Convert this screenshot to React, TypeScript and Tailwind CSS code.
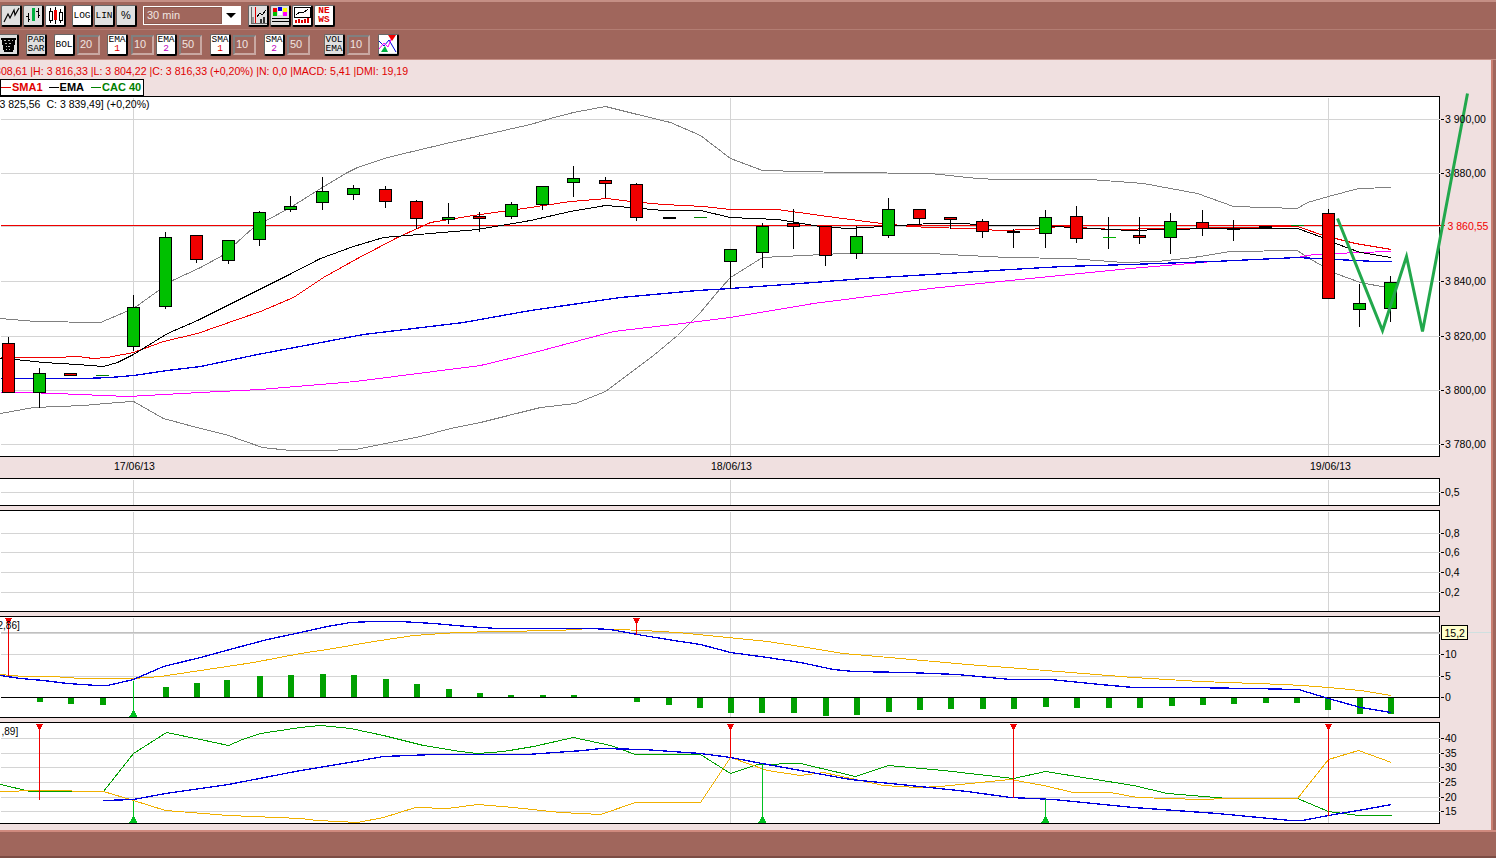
import React from 'react';

// [x, bodyTop, bodyBottom, wickTop, wickBottom, colour]
type Candle = [number, number, number, number, number, 'g' | 'r'];

const candles: Candle[] = [
  [8, 343, 392, 336, 392, 'r'], [39, 373, 392, 367, 407, 'g'], [70, 373, 375, 373, 375, 'r'],
  [133, 307, 346, 294, 350, 'g'], [165, 237, 306, 231, 308, 'g'], [196, 235, 259, 235, 262, 'r'],
  [228, 240, 260, 240, 263, 'g'], [259, 212, 239, 210, 245, 'g'], [290, 206, 209, 195, 211, 'g'],
  [322, 191, 202, 176, 209, 'g'], [353, 188, 194, 184, 199, 'g'], [385, 189, 201, 185, 207, 'r'],
  [416, 201, 218, 199, 228, 'r'], [448, 217, 219, 202, 223, 'g'], [479, 216, 218, 211, 231, 'r'],
  [511, 204, 216, 201, 218, 'g'], [542, 186, 204, 185, 209, 'g'], [573, 178, 182, 165, 196, 'g'],
  [605, 180, 183, 176, 197, 'r'], [636, 184, 217, 182, 220, 'r'], [730, 249, 261, 249, 288, 'g'],
  [762, 226, 252, 222, 267, 'g'], [793, 223, 226, 208, 248, 'r'], [825, 226, 255, 225, 265, 'r'],
  [856, 236, 253, 225, 258, 'g'], [888, 209, 235, 197, 237, 'g'], [919, 209, 218, 209, 223, 'r'],
  [950, 217, 219, 216, 228, 'r'], [982, 221, 231, 218, 237, 'r'], [1013, 231, 232, 228, 247, 'r'],
  [1045, 217, 233, 209, 247, 'g'], [1076, 216, 238, 205, 242, 'r'], [1139, 235, 237, 216, 243, 'r'],
  [1170, 221, 237, 212, 253, 'g'], [1202, 222, 228, 209, 235, 'r'], [1233, 228, 229, 219, 240, 'r'],
  [1265, 226, 227, 226, 227, 'g'], [1328, 213, 298, 208, 298, 'r'], [1359, 303, 309, 283, 326, 'g'],
  [1390, 282, 308, 275, 321, 'g'],
];

const bandUp = '0,318 35,321 100,322 133,308 172,280 200,267 222,255 253,227 290,207 317,190 347,172 357,167 387,157 450,142 530,124 550,118 573,112 605,106 637,114 670,122 700,135 730,158 762,170 843,172 930,173 977,178 997,179 1090,179 1143,183 1197,193 1233,206 1297,208 1307,202 1328,196 1358,188 1391,187';
const bandLow = '0,413 33,407 83,405 117,402 133,401 163,418 200,428 225,434 262,447 290,450 320,450 355,449 385,443 420,436 450,428 480,422 540,407 575,403 605,391 653,355 677,335 700,312 720,288 730,277 762,257 843,253 930,253 967,255 1007,257 1070,258 1123,262 1157,261 1193,257 1230,251 1297,250 1307,257 1323,266 1335,273 1360,282 1391,288';
const emaShort = '0,358 15,359 43,362 77,364 103,366 117,362 133,354 167,333 197,320 247,295 287,275 320,258 353,246 383,237 477,229 530,220 570,211 605,205 630,207 663,210 700,210 730,217 777,219 820,226 847,228 883,226 930,223 963,223 990,225 1037,225 1090,228 1130,230 1163,229 1217,228 1297,228 1322,237 1335,243 1360,252 1391,257';
const smaShort = '0,357 55,357 77,356 93,358 107,357 133,352 163,341 197,333 260,311 293,297 323,277 357,258 397,237 430,222 473,215 530,207 570,201 607,198 630,201 663,204 703,206 730,209 777,209 820,215 873,222 910,226 930,227 967,228 1000,230 1030,229 1060,226 1113,229 1163,228 1297,226 1323,235 1355,243 1391,249';
const emaLong = '0,378 83,378 110,377 133,375 167,370 200,366 257,354 363,334 463,322 530,310 620,297 697,290 730,288 813,282 863,278 930,274 1010,269 1063,266 1130,264 1213,261 1297,257 1335,259 1375,261 1391,261';
const smaLong = '0,392 25,392 55,393 127,396 200,392 260,389 355,381 480,365 530,353 613,331 690,322 730,317 813,303 930,288 1030,278 1130,268 1213,261 1297,257 1313,254 1358,252 1391,251';

const macdBlue = '0,675 20,678 43,680 67,683 97,685 107,685 133,679 163,666 200,657 233,648 267,639 300,632 327,626 350,622 373,621 400,621 433,623 467,626 497,628 530,628 590,628 610,629 637,634 667,639 700,644 730,652 767,657 800,662 833,669 853,671 907,672 957,674 1010,679 1050,679 1100,684 1133,687 1187,687 1250,688 1298,689 1328,698 1360,707 1391,712';
const macdOrange = '0,674 23,676 53,676 80,678 133,678 160,676 200,670 253,662 300,653 333,648 367,642 413,635 457,632 497,631 557,630 590,628 643,630 677,632 727,637 767,641 800,646 843,653 900,658 967,664 1020,668 1083,673 1133,677 1200,681 1283,684 1302,685 1328,687 1360,690 1391,695';
const histogram: [number, number][] = [
  [40, 701], [71, 703], [103, 704], [166, 686], [197, 682], [227, 679], [260, 675], [291, 674], [323, 673],
  [354, 674], [386, 678], [417, 683], [449, 688], [480, 692], [511, 694], [543, 694], [574, 694], [606, 696],
  [637, 701], [669, 704], [700, 707], [731, 712], [762, 712], [794, 712], [826, 715], [857, 714], [889, 711],
  [920, 709], [951, 708], [983, 708], [1014, 708], [1046, 706], [1077, 707], [1109, 707], [1140, 707],
  [1172, 705], [1203, 704], [1234, 703], [1266, 702], [1297, 702], [1328, 709], [1360, 713], [1391, 713],
];

const dmiGreen = '0,784 30,791 103,791 133,753 166,732 200,739 228,745 242,739 260,733 300,727 320,725 350,728 383,735 423,745 460,751 477,753 503,751 533,746 573,737 610,745 635,754 700,754 730,773 757,764 800,763 855,776 888,765 943,770 1013,778 1045,771 1133,785 1167,793 1227,798 1297,798 1328,811 1358,815 1391,815';
const dmiOrange = '0,791 38,790 103,791 133,800 165,810 228,815 300,818 317,820 357,822 383,817 415,807 447,808 477,804 513,807 560,812 600,814 635,802 700,802 730,757 767,770 800,775 823,772 883,785 917,787 940,786 1010,779 1043,785 1073,792 1110,792 1137,797 1200,799 1227,798 1297,798 1328,759 1358,750 1391,762';
const dmiBlue = '103,800 133,799 165,793 228,784 300,770 343,763 383,756 433,754 527,754 583,750 600,748 643,749 700,753 730,757 767,764 800,770 850,779 900,784 967,791 1010,797 1053,799 1133,807 1217,813 1290,820 1302,820 1328,815 1358,810 1391,804';

function Line({ points, color, width = 1 }: { points: string; color: string; width?: number }) {
  return <polyline points={points} fill="none" stroke={color} strokeWidth={width} shapeRendering="crispEdges" />;
}

function Signal({ x, from, to, up }: { x: number; from: number; to: number; up?: boolean }) {
  const color = up ? '#00c020' : '#f00000';
  return (
    <g shapeRendering="crispEdges">
      <line x1={x} x2={x} y1={from} y2={to} stroke={color} />
      {up ? (
        <polygon points={`${x - 4},${to} ${x + 4},${to} ${x},${to - 7}`} fill={color} />
      ) : (
        <polygon points={`${x - 4},${from} ${x + 4},${from} ${x},${from + 7}`} fill={color} />
      )}
    </g>
  );
}

// one chart pane: white plot plus the scale on its right, drawn in page coordinates
function Pane({ top, height, grid, children }: {
  top: number;
  height: number;
  grid: [number, string][];
  children?: React.ReactNode;
}) {
  return (
    <div className="relative shrink-0" style={{ height }}>
      <div className="h-full w-[1440px] border-y border-r border-black bg-white" />
      <svg className="absolute left-0 top-0 overflow-visible" width={1491} height={height} viewBox={`0 ${top} 1491 ${height}`}>
        <g transform="translate(0.5 0.5)">
          {grid.map(([y]) => (
            <g key={y} shapeRendering="crispEdges">
              <line x1={0} x2={1439} y1={y} y2={y} stroke="#d4d4d4" />
              <line x1={1440} x2={1443} y1={y} y2={y} stroke="#000" />
            </g>
          ))}
          {[133, 730, 1328].map((x) => (
            <line key={x} x1={x} x2={x} y1={top + 1} y2={top + height - 2} stroke="#d4d4d4" shapeRendering="crispEdges" />
          ))}
          {children}
        </g>
        {grid.map(([y, label]) => (
          <text key={y} x={1445} y={y + 3.5} className="text-[10.5px]" fill="#000">{label}</text>
        ))}
      </svg>
    </div>
  );
}

function Btn({ white, className = 'w-[21px]', children }: { white?: boolean; className?: string; children: React.ReactNode }) {
  return (
    <div
      className={`${className} ${white ? 'bg-white' : 'bg-[#e0e0e0]'} flex h-[22px] shrink-0 flex-col items-center justify-center rounded-[2px] border-t border-r-2 border-b-2 border-l border-t-[#666] border-r-black border-b-black border-l-[#666] font-['Liberation_Mono',monospace] text-[9.5px] leading-[9px] text-black`}
    >
      {children}
    </div>
  );
}

function NumBox({ value }: { value: string }) {
  return (
    <div className="flex h-[20px] w-[23px] shrink-0 items-center border-2 border-[#808080] border-r-[#c9a8a2] border-b-[#c9a8a2] pl-[1px] text-[11px] text-[#f0e4e0]">
      {value}
    </div>
  );
}

function Indicator({ name, num, color }: { name: string; num: string; color: string }) {
  return (
    <Btn white>
      <span>{name}</span>
      <span className={color}>{num}</span>
    </Btn>
  );
}

export default function App() {
  return (
    <div className="flex h-[858px] w-[1496px] flex-col overflow-hidden bg-[#a0665c] font-['Liberation_Sans',Arial,sans-serif]">
      {/* toolbar, first row */}
      <div className="flex h-[30px] shrink-0 items-center border-t-2 border-b border-t-[#c58f85] border-b-[#b37d73] pl-[1px]">
        <Btn>
          <svg width="17" height="16" viewBox="0 0 17 16">
            <polyline points="1,15 5,7 7,11 11,3 12,8 16,1" fill="none" stroke="#000" strokeWidth="1.2" />
          </svg>
        </Btn>
        <Btn className="ml-[1px] w-[21px]">
          <svg width="17" height="16" viewBox="0 0 17 16" shapeRendering="crispEdges">
            <path d="M3 6v9M1 9h2M3 12h2M13 1v10M11 4h2M13 8h2" stroke="#000" fill="none" />
            <rect x="7" y="1" width="3" height="13" fill="#00b040" />
          </svg>
        </Btn>
        <Btn white className="ml-[1px] w-[21px]">
          <svg width="17" height="17" viewBox="0 0 17 17" shapeRendering="crispEdges">
            <path d="M3.5 1v15M13.5 2v14" stroke="#000" />
            <rect x="2" y="4" width="3" height="9" fill="#fff" stroke="#000" />
            <rect x="12" y="5" width="3" height="8" fill="#fff" stroke="#000" />
            <path d="M8.5 0v17" stroke="#000" />
            <rect x="7" y="3" width="3" height="10" fill="#f00000" />
          </svg>
        </Btn>
        <Btn white className="ml-[6px] w-[21px]">LOG</Btn>
        <Btn className="ml-[1px] w-[21px]">LIN</Btn>
        <Btn className="ml-[1px] w-[21px]">
          <span className="font-['Liberation_Sans',sans-serif] text-[11px]">%</span>
        </Btn>
        <div className="ml-[6px] flex h-[19px] w-[98px] items-center border border-white">
          <div className="flex h-full w-[78px] items-center border border-[#8b5a50] pl-[2px] text-[11px] text-[#f0e4e0]">30 min</div>
          <div className="flex h-full flex-1 items-center justify-center bg-white">
            <div className="h-0 w-0 border-x-[5px] border-t-[5px] border-x-transparent border-t-black" />
          </div>
        </div>
        <Btn className="ml-[7px] w-[21px]">
          <svg width="17" height="17" viewBox="0 0 17 17" shapeRendering="crispEdges">
            <path d="M1 0v16h16" stroke="#666" fill="none" />
            <rect x="2" y="10" width="2" height="6" fill="#999" />
            <rect x="10" y="12" width="2" height="4" fill="#333" />
            <rect x="13" y="10" width="2" height="6" fill="#333" />
            <path d="M5.5 0v16" stroke="#e00000" />
            <polyline points="7,10 10,6 12,8 16,3" stroke="#000" fill="none" />
          </svg>
        </Btn>
        <Btn className="ml-[1px] w-[21px]">
          <svg width="17" height="16" viewBox="0 0 17 16" shapeRendering="crispEdges">
            <rect x="1" y="1" width="4" height="4" fill="#f00000" />
            <rect x="6" y="0" width="4" height="4" fill="#0000e0" />
            <rect x="11" y="1" width="4" height="4" fill="#ffff00" />
            <rect x="1" y="5" width="4" height="4" fill="#00c000" />
            <rect x="6" y="4" width="4" height="4" fill="#ffffff" />
            <rect x="11" y="5" width="4" height="4" fill="#ff00ff" />
            <rect x="0" y="11" width="17" height="1" fill="#000" />
            <rect x="0" y="14" width="17" height="1" fill="#000" />
          </svg>
        </Btn>
        <Btn white className="ml-[1px] w-[21px]">
          <svg width="17" height="16" viewBox="0 0 17 16" shapeRendering="crispEdges">
            <path d="M0.5 0v10h16V0h-16" stroke="#000" fill="none" />
            <polyline points="2,8 6,5 9,6 14,2" stroke="#000" fill="none" />
            <path d="M2 16v-3M5 16v-4M8 16v-3M11 16v-4M14 16v-5" stroke="#e00000" strokeWidth="1.5" />
          </svg>
        </Btn>
        <Btn white className="ml-[1px] w-[21px]">
          <span className="font-bold text-[#e00000]">NE</span>
          <span className="font-bold text-[#e00000]">WS</span>
        </Btn>
      </div>

      {/* toolbar, second row */}
      <div className="flex h-[30px] shrink-0 items-center border-b border-[#c58f85]">
        <Btn className="-ml-[2px] w-[21px]">
          <svg width="15" height="15" viewBox="0 0 15 15" shapeRendering="crispEdges">
            <polygon points="0,1 15,1 12,15 3,15" fill="#000" />
            <path d="M3 3h2M7 3h2M11 3h1M4 6h2M8 6h2M5 9h1M7 9h2M5 12h1M8 12h1" stroke="#bbb" />
          </svg>
        </Btn>
        <Btn className="ml-[7px] w-[21px]"><span>PAR</span><span>SAR</span></Btn>
        <Btn white className="ml-[7px] w-[21px]">BOL</Btn>
        <div className="ml-[2px]"><NumBox value="20" /></div>
        <div className="ml-[7px]"><Indicator name="EMA" num="1" color="text-[#e00000]" /></div>
        <div className="ml-[3px]"><NumBox value="10" /></div>
        <div className="ml-[2px]"><Indicator name="EMA" num="2" color="text-[#c000c0]" /></div>
        <div className="ml-[2px]"><NumBox value="50" /></div>
        <div className="ml-[8px]"><Indicator name="SMA" num="1" color="text-[#e00000]" /></div>
        <div className="ml-[2px]"><NumBox value="10" /></div>
        <div className="ml-[8px]"><Indicator name="SMA" num="2" color="text-[#c000c0]" /></div>
        <div className="ml-[2px]"><NumBox value="50" /></div>
        <Btn className="ml-[14px] w-[21px]"><span>VOL</span><span>EMA</span></Btn>
        <div className="ml-[2px]"><NumBox value="10" /></div>
        <Btn className="ml-[8px] w-[21px]">
          <svg width="18" height="18" viewBox="0 0 18 18">
            <rect width="18" height="18" fill="#fff" />
            <polyline points="0,6 5,11 10,5 17,17" fill="none" stroke="#0000e0" />
            <polyline points="0,14 5,8 9,12 13,2" fill="none" stroke="#ff00ff" />
            <polygon points="9,0 17,0 13,6" fill="#f00000" />
            <polygon points="2,17 9,17 6,11" fill="#00b040" />
          </svg>
        </Btn>
      </div>

      {/* pink work area */}
      <div className="flex h-[770px] w-[1493px] shrink-0 flex-col overflow-hidden border-r-2 border-r-[#c97f72] bg-[#f0e0e0]">
        <div className="-ml-[5px] mt-[6px] h-[11px] whitespace-nowrap text-[10.6px] leading-[11px] text-[#e00000]">
          808,61 |H: 3 816,33 |L: 3 804,22 |C: 3 816,33 (+0,20%) |N: 0,0 |MACD: 5,41 |DMI: 19,19
        </div>
        <div className="mt-[2px] flex h-[17px] w-[144px] items-center border border-black bg-white text-[11px] font-bold leading-none">
          <span className="mr-[1px] h-px w-[10px] bg-[#e00000]" />
          <span className="text-[#e00000]">SMA1</span>
          <span className="ml-[6px] mr-[1px] h-px w-[10px] bg-black" />
          <span className="text-black">EMA</span>
          <span className="ml-[7px] mr-[1px] h-px w-[10px] bg-[#008000]" />
          <span className="text-[#008000]">CAC 40</span>
        </div>

        <Pane
          top={96}
          height={361}
          grid={[
            [119, '3 900,00'], [173, '3 880,00'], [281, '3 840,00'], [336, '3 820,00'], [390, '3 800,00'], [444, '3 780,00'],
          ]}
        >
          <line x1={0} x2={1439} y1={226} y2={226} stroke="#d4d4d4" shapeRendering="crispEdges" />
          <line x1={0} x2={1444} y1={225} y2={225} stroke="#f00000" shapeRendering="crispEdges" />
          <Line points={bandUp} color="#808080" />
          <Line points={bandLow} color="#808080" />
          <Line points={smaLong} color="#ff00ff" />
          <Line points={emaLong} color="#0000e0" width={1.3} />
          <Line points={smaShort} color="#f00000" />
          <Line points={emaShort} color="#000" />
          <g shapeRendering="crispEdges">
            {candles.map(([x, t, b, wt, wb, c]) => (
              <g key={x}>
                <line x1={x} x2={x} y1={wt} y2={wb} stroke="#000" />
                <rect x={x - 6} y={t} width={12} height={b - t} fill={c === 'g' ? '#00c000' : '#f00000'} stroke="#000" />
              </g>
            ))}
            <line x1={95} x2={108} y1={375} y2={375} stroke="#008000" />
            <rect x={662} y={216} width={13} height={2} fill="#000" />
            <line x1={693} x2={706} y1={217} y2={217} stroke="#008000" />
            <line x1={1108} x2={1108} y1={216} y2={248} stroke="#000" />
            <line x1={1102} x2={1115} y1={237} y2={237} stroke="#00b000" />
            <line x1={1290} x2={1303} y1={225} y2={225} stroke="#008000" />
          </g>
          <polyline points="1337,218 1382,330 1406,256 1422,331 1467,93" fill="none" stroke="#22a84c" strokeWidth="3" />
          <text y={107} className="text-[10.5px]" fill="#000">
            <tspan x={-1}>3 825,56</tspan>
            <tspan x={46}>C: 3 839,49] (+0,20%)</tspan>
          </text>
          <text x={1447} y={229} className="text-[10.5px]" fill="#f00000">3 860,55</text>
        </Pane>

        {/* dates under the main chart */}
        <div className="relative h-[21px] shrink-0 text-[10.5px] text-black">
          <span className="absolute left-[114px] top-[2px]">17/06/13</span>
          <span className="absolute left-[711px] top-[2px]">18/06/13</span>
          <span className="absolute left-[1310px] top-[2px]">19/06/13</span>
        </div>

        <Pane top={478} height={28} grid={[[492, '0,5']]} />
        <div className="h-[4px] shrink-0" />
        <Pane top={510} height={102} grid={[[533, '0,8'], [552, '0,6'], [572, '0,4'], [592, '0,2']]} />
        <div className="h-[4px] shrink-0" />

        <Pane
          top={616}
          height={102}
          grid={[[633, ''], [654, '10'], [676, '5'], [697, '0']]}
        >
          <line x1={0} x2={1439} y1={632} y2={632} stroke="#c0c0c0" shapeRendering="crispEdges" />
          <line x1={1467} x2={1490} y1={632} y2={632} stroke="#cfe0e0" shapeRendering="crispEdges" />
          <g shapeRendering="crispEdges">
            {histogram.map(([x, y]) => (
              <rect key={x} x={x - 3.5} y={Math.min(y, 697)} width={6} height={Math.abs(y - 697)} fill="#00a000" />
            ))}
            <line x1={0} x2={1439} y1={697} y2={697} stroke="#000" />
          </g>
          <Line points={macdOrange} color="#f0b000" />
          <Line points={macdBlue} color="#0000e0" width={1.3} />
          <Signal x={8} from={617} to={675} />
          <Signal x={133} from={680} to={716} up />
          <Signal x={636} from={617} to={634} />
          <text x={-3} y={628} className="text-[10px]" fill="#000">2,86]</text>
          <rect x={1441} y={625} width={26} height={14} fill="#ffffcc" stroke="#000" shapeRendering="crispEdges" />
          <text x={1444} y={636} className="text-[10.5px]" fill="#000">15,2</text>
        </Pane>
        <div className="h-[4px] shrink-0" />

        <Pane
          top={722}
          height={102}
          grid={[[738, '40'], [753, '35'], [767, '30'], [782, '25'], [797, '20'], [811, '15']]}
        >
          <Line points={dmiGreen} color="#00a000" />
          <Line points={dmiOrange} color="#f0b000" />
          <Line points={dmiBlue} color="#0000e0" width={1.3} />
          <Signal x={39} from={723} to={799} />
          <Signal x={133} from={800} to={822} up />
          <Signal x={730} from={723} to={757} />
          <Signal x={762} from={763} to={822} up />
          <Signal x={1013} from={723} to={797} />
          <Signal x={1045} from={798} to={822} up />
          <Signal x={1328} from={723} to={815} />
          <text x={1} y={734} className="text-[10px]" fill="#000">,89]</text>
        </Pane>
      </div>

      {/* status strip */}
      <div className="h-[28px] w-full shrink-0 border-t-2 border-b-2 border-t-[#d08a7e] border-b-[#7c4c44] bg-[#a0665c]" />
    </div>
  );
}
